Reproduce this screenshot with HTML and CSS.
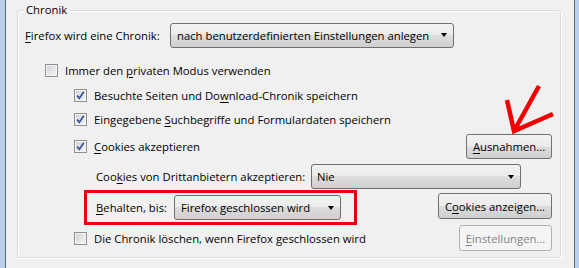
FILE: index.html
```html
<!DOCTYPE html>
<html lang="de">
<head>
    <meta charset="UTF-8">
    <title>Chronik</title>
    <link rel="stylesheet" href="styles.css">
</head>
<body>
    <div class="window">
        <div class="edge edge-left"></div>
        <div class="pane">
            <div class="group">
                <div class="legend">Chronik</div>

                <div class="row row-mode">
                    <span class="label label-mode"><u>F</u>irefox wird eine Chronik:</span>
                    <div class="combo combo-mode"><span>nach benutzerdefinierten Einstellungen anlegen</span><i class="arrow"></i></div>
                </div>

                <div class="row row-private">
                    <span class="check"></span>
                    <span class="label">Immer den <u>p</u>rivaten Modus verwenden</span>
                </div>

                <div class="row row-sub row-visited">
                    <span class="check checked"><svg viewBox="0 0 11 11"><path d="M2.2 5.6 L4.4 8.3 L8.8 1.8"/></svg></span>
                    <span class="label">Besuchte Seiten und Do<u>w</u>nload-Chronik speichern</span>
                </div>

                <div class="row row-sub">
                    <span class="check checked"><svg viewBox="0 0 11 11"><path d="M2.2 5.6 L4.4 8.3 L8.8 1.8"/></svg></span>
                    <span class="label">Eingegebene <u>S</u>uchbegriffe und Formulardaten speichern</span>
                </div>

                <div class="row row-sub row-cookies">
                    <span class="check checked"><svg viewBox="0 0 11 11"><path d="M2.2 5.6 L4.4 8.3 L8.8 1.8"/></svg></span>
                    <span class="label"><u>C</u>ookies akzeptieren</span>
                    <button class="btn btn-exceptions"><u>A</u>usnahmen...</button>
                </div>

                <div class="row row-third">
                    <span class="label label-third">Coo<u>k</u>ies von Drittanbietern akzeptieren:</span>
                    <div class="combo combo-third"><span>Nie</span><i class="arrow"></i></div>
                </div>

                <div class="row row-keep">
                    <div class="marked">
                        <span class="label label-keep"><u>B</u>ehalten, bis:</span>
                        <div class="combo combo-keep"><span>Firefox geschlossen wird</span><i class="arrow"></i></div>
                    </div>
                    <button class="btn btn-show">C<u>o</u>okies anzeigen...</button>
                </div>

                <div class="row row-sub row-clear">
                    <span class="check"></span>
                    <span class="label">Die Chronik löschen, wenn Firefox <u>g</u>eschlossen wird</span>
                    <button class="btn btn-settings" disabled><u>E</u>instellungen...</button>
                </div>
            </div>
        </div>
        <div class="edge edge-right"></div>

        <svg class="pointer" viewBox="0 0 579 268">
            <path d="M539 86 L514 131"/>
            <path d="M507 100 L514 131 L553 114"/>
        </svg>
    </div>
</body>
</html>
```

FILE: styles.css
```css
*{
    margin: 0;
    padding: 0;
    box-sizing: border-box;
}
body{
    background-color: #f0f0f0;
    font-family: "Open Sans", "Liberation Sans", sans-serif;
    font-size: 11.3px;
    color: #000;
}
.window{
    position: relative;
    display: flex;
    width: 579px;
    height: 268px;
}
.edge-left{
    width: 6px;
    background: linear-gradient(to right, #b9d1ea 5px, #5d6a78 5px);
}
.edge-right{
    width: 5px;
    background: linear-gradient(to right, #5d6a78 1px, #b9d1ea 1px);
}
.pane{
    flex: 1;
}
.group{
    position: relative;
    margin: 10px 0 0 11px;
    width: 544px;
    height: 248px;
    border: 1px solid #d5dfe5;
    border-radius: 3px;
    box-shadow: inset 1px 1px 0 #fff, 1px 1px 0 #fff;
    padding: 12px 8px 0 7px;
}
.legend{
    position: absolute;
    top: -9px;
    left: 6px;
    padding: 0 2px;
    background-color: #f0f0f0;
    line-height: 16px;
}
.row{
    display: flex;
    align-items: center;
    height: 24px;
}
.label{
    white-space: nowrap;
}
u{
    text-decoration-thickness: 1px;
    text-underline-offset: 2px;
}
.label-mode{
    width: 145px;
}
.row-private{
    margin-top: 11px;
    padding-left: 20px;
}
.row-visited{
    margin-top: 1px;
}
.row-sub{
    padding-left: 49px;
}
.row-cookies{
    margin-top: 2px;
    height: 26px;
}
.row-third{
    margin-top: 5px;
    height: 25px;
    padding-left: 71px;
}
.label-third{
    width: 215px;
}
.row-keep{
    margin-top: 1px;
    height: 35px;
    padding-left: 59px;
}
.marked{
    display: flex;
    align-items: center;
    height: 35px;
    border: 3px solid #e8000c;
    padding: 0 13px 0 9px;
}
.label-keep{
    width: 78px;
}
.row-clear{
    height: 26px;
}

.check{
    width: 13px;
    height: 13px;
    margin-right: 7px;
    border: 1px solid #8e8f8f;
    background: linear-gradient(135deg, #cdd1d6, #f7f7f7);
    box-shadow: inset 0 0 0 1px #f4f4f4;
    display: flex;
    align-items: center;
    justify-content: center;
}
.check svg{
    width: 11px;
    height: 11px;
}
.check path{
    fill: none;
    stroke: #3d5796;
    stroke-width: 1.8;
}

.combo{
    display: flex;
    align-items: center;
    justify-content: space-between;
    height: 25px;
    border: 1px solid #707070;
    border-radius: 3px;
    background: linear-gradient(#f2f2f2 0%, #ebebeb 50%, #dddddd 50%, #cfcfcf 100%);
    padding: 0 6px 0 6px;
    white-space: nowrap;
}
.arrow{
    width: 0;
    height: 0;
    border-top: 4px solid #000;
    border-left: 3.5px solid transparent;
    border-right: 3.5px solid transparent;
}
.combo-mode{
    width: 284px;
}
.combo-third{
    width: 210px;
    padding-left: 5px;
}
.combo-keep{
    width: 167px;
}

.btn{
    margin-left: auto;
    height: 25px;
    font: inherit;
    color: #000;
    border: 1px solid #707070;
    border-radius: 3px;
    background: linear-gradient(#f2f2f2 0%, #ebebeb 50%, #dddddd 50%, #cfcfcf 100%);
    white-space: nowrap;
}
.btn-exceptions{
    width: 86px;
}
.btn-show{
    width: 114px;
    height: 26px;
    margin-top: -3px;
}
.btn-settings{
    width: 93px;
    height: 26px;
    color: #838383;
    border-color: #adb2b5;
    background: #f4f4f4;
}

.pointer{
    position: absolute;
    left: 0;
    top: 0;
    width: 579px;
    height: 268px;
    pointer-events: none;
}
.pointer path{
    fill: none;
    stroke: #f20000;
    stroke-width: 4.5;
}
```
